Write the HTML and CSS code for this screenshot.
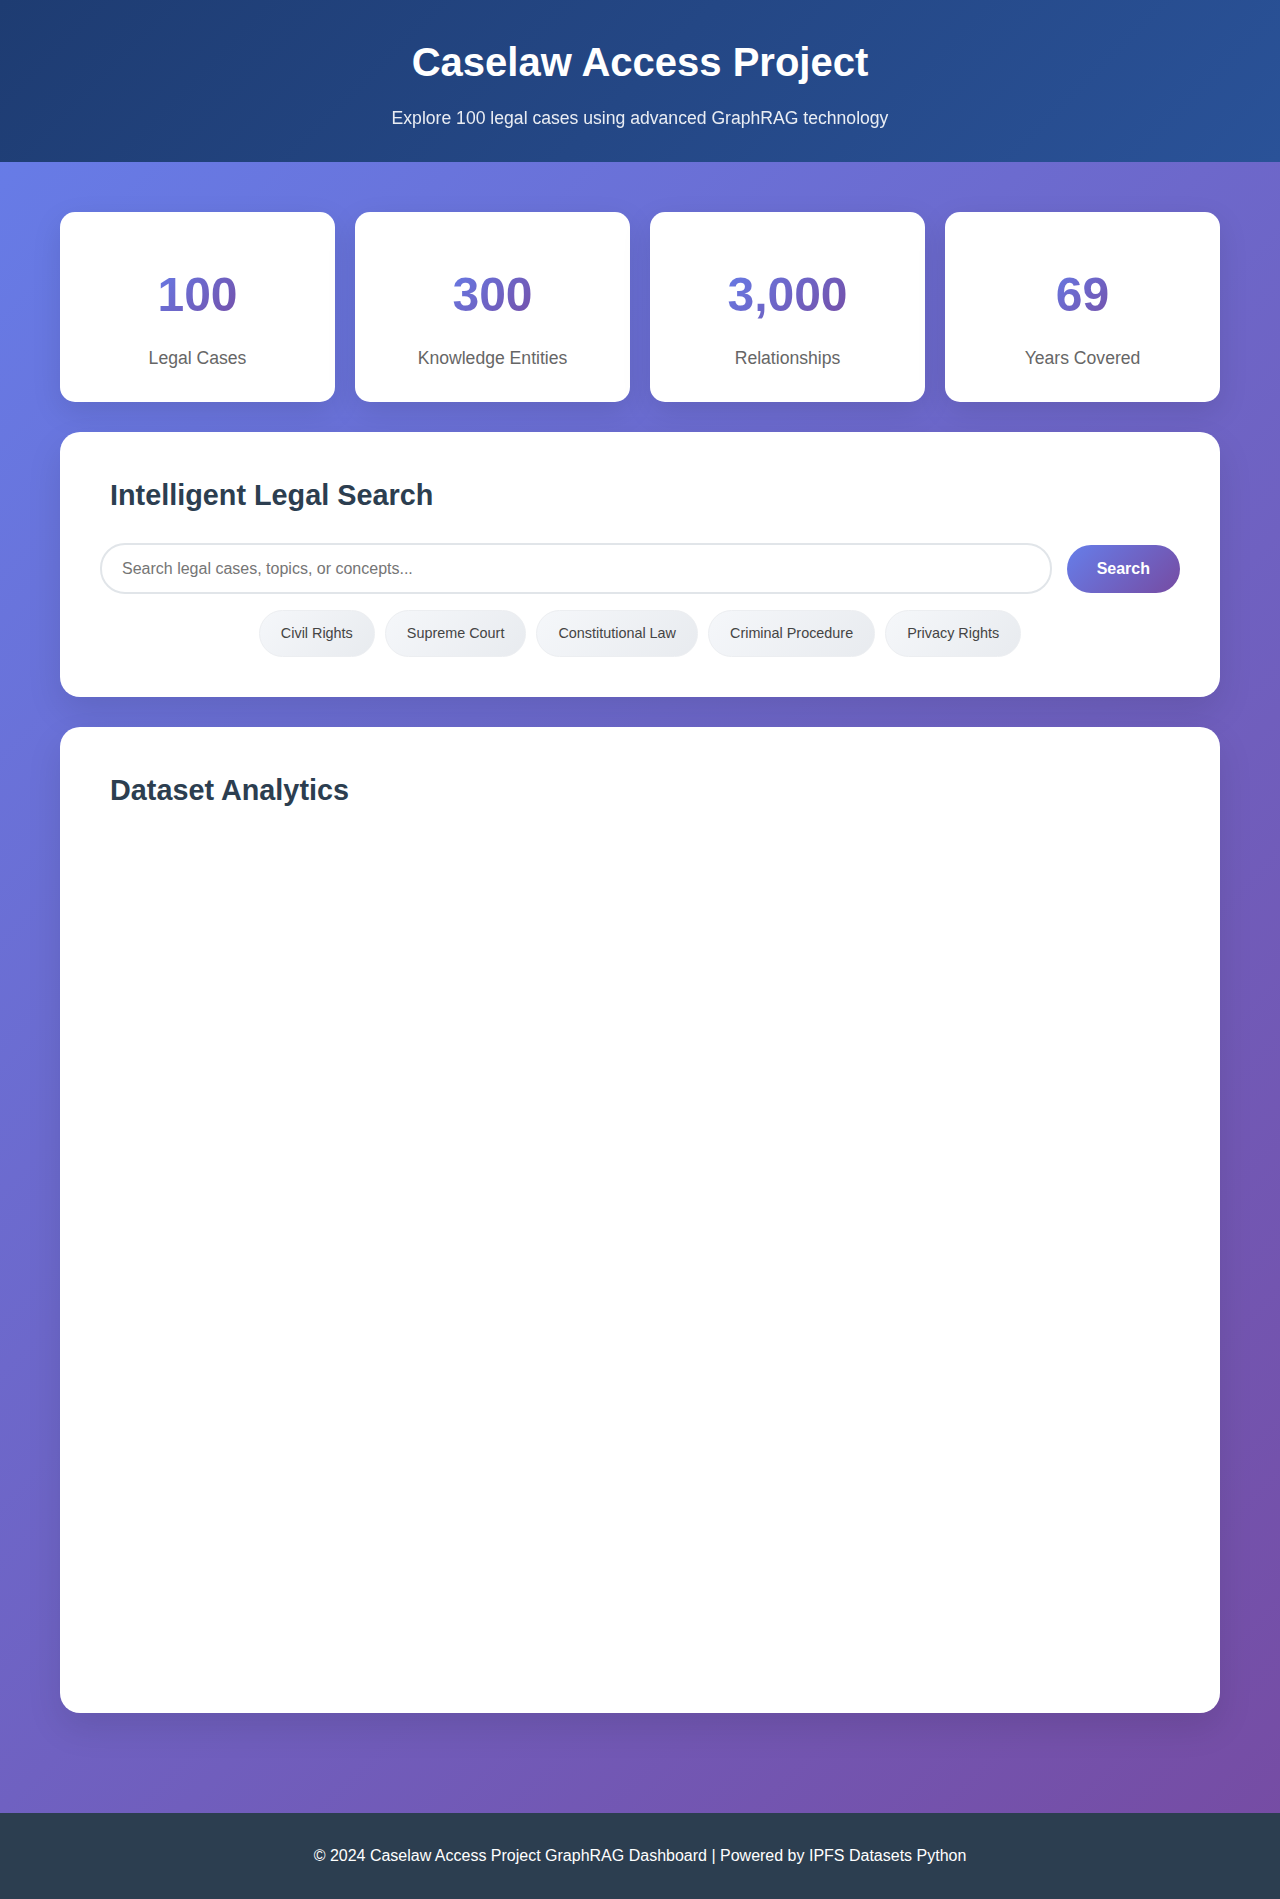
FILE: index.html
```html
<!DOCTYPE html>
<html lang="en">
<head>
<meta charset="UTF-8">
<title>Caselaw Access Project</title>
<link rel="stylesheet" href="styles.css">
</head>
<body>
<header class="header">
  <h1 class="header-title">Caselaw Access Project</h1>
  <p class="header-sub">Explore 100 legal cases using advanced GraphRAG technology</p>
</header>

<main class="main">
  <div class="stats">
    <div class="stat-card">
      <div class="stat-number">100</div>
      <div class="stat-label">Legal Cases</div>
    </div>
    <div class="stat-card">
      <div class="stat-number">300</div>
      <div class="stat-label">Knowledge Entities</div>
    </div>
    <div class="stat-card">
      <div class="stat-number">3,000</div>
      <div class="stat-label">Relationships</div>
    </div>
    <div class="stat-card">
      <div class="stat-number">69</div>
      <div class="stat-label">Years Covered</div>
    </div>
  </div>

  <section class="panel">
    <h2 class="panel-title">Intelligent Legal Search</h2>
    <div class="search-row">
      <input class="search-input" type="text" placeholder="Search legal cases, topics, or concepts...">
      <button class="search-btn" type="button">Search</button>
    </div>
    <div class="chips">
      <span class="chip">Civil Rights</span>
      <span class="chip">Supreme Court</span>
      <span class="chip">Constitutional Law</span>
      <span class="chip">Criminal Procedure</span>
      <span class="chip">Privacy Rights</span>
    </div>
  </section>

  <section class="panel">
    <h2 class="panel-title">Dataset Analytics</h2>
    <div class="analytics-area"></div>
  </section>
</main>

<footer class="footer">
  <p class="footer-text">© 2024 Caselaw Access Project GraphRAG Dashboard | Powered by IPFS Datasets Python</p>
</footer>
</body>
</html>
```

FILE: styles.css
```css
* {
  box-sizing: border-box;
}

html, body {
  margin: 0;
  padding: 0;
}

body {
  font-family: "Liberation Sans", Arial, sans-serif;
  line-height: 1.6;
  color: #333;
  background: linear-gradient(135deg, #667eea 0%, #764ba2 100%);
  min-height: 100vh;
}

.header {
  background: linear-gradient(135deg, #1e3c72 0%, #2a5298 100%);
  color: #fff;
  text-align: center;
  padding: 30px 20px;
}

.header-title {
  margin: 0 0 10px;
  font-size: 40px;
  font-weight: 700;
}

.header-sub {
  margin: 0;
  font-size: 17.6px;
  opacity: 0.9;
}

.main {
  max-width: 1200px;
  margin: 0 auto;
  padding: 50px 20px 100px;
  display: flex;
  flex-direction: column;
  gap: 30px;
}

.stats {
  display: grid;
  grid-template-columns: repeat(4, 1fr);
  gap: 20px;
}

.stat-card {
  background: #fff;
  border-radius: 15px;
  padding: 45px 20px 30px;
  text-align: center;
  height: 190px;
  box-shadow: 0 10px 30px rgba(0, 0, 0, 0.1);
}

.stat-number {
  font-size: 48px;
  font-weight: 700;
  background: linear-gradient(135deg, #667eea 0%, #764ba2 100%);
  -webkit-background-clip: text;
  background-clip: text;
  -webkit-text-fill-color: transparent;
  color: transparent;
  display: inline-block;
  margin-bottom: 10px;
}

.stat-label {
  font-size: 17.6px;
  color: #666;
}

.panel {
  background: #fff;
  border-radius: 20px;
  padding: 40px;
  box-shadow: 0 15px 35px rgba(0, 0, 0, 0.1);
}

.panel-title {
  margin: 0 0 25px;
  padding-left: 10px;
  font-size: 28.8px;
  font-weight: 700;
  color: #2c3e50;
}

.search-row {
  display: flex;
  align-items: center;
  gap: 15px;
}

.search-input {
  flex: 1;
  height: 51px;
  padding: 0 20px;
  border: 2px solid #e1e5e9;
  border-radius: 25px;
  font-family: inherit;
  font-size: 16px;
  color: #333;
  outline: none;
  background: #fff;
}

.search-input::placeholder {
  color: #757575;
}

.search-btn {
  padding: 15px 30px;
  border: none;
  border-radius: 25px;
  background: linear-gradient(135deg, #667eea 0%, #764ba2 100%);
  color: #fff;
  font-family: inherit;
  font-size: 16px;
  font-weight: 700;
  line-height: normal;
  cursor: pointer;
}

.chips {
  display: flex;
  justify-content: center;
  flex-wrap: wrap;
  gap: 10px;
  margin-top: 16px;
}

.chip {
  padding: 11px 21px;
  border: 1px solid #eceef1;
  border-radius: 25px;
  background: linear-gradient(135deg, #f5f7fa 0%, #e8ebef 100%);
  font-size: 14.4px;
  color: #444;
}

.analytics-area {
  height: 835px;
}

.footer {
  background: #2c3e50;
  color: #fff;
  text-align: center;
  padding: 30px 20px;
}

.footer-text {
  margin: 0;
  font-size: 16px;
}
```
